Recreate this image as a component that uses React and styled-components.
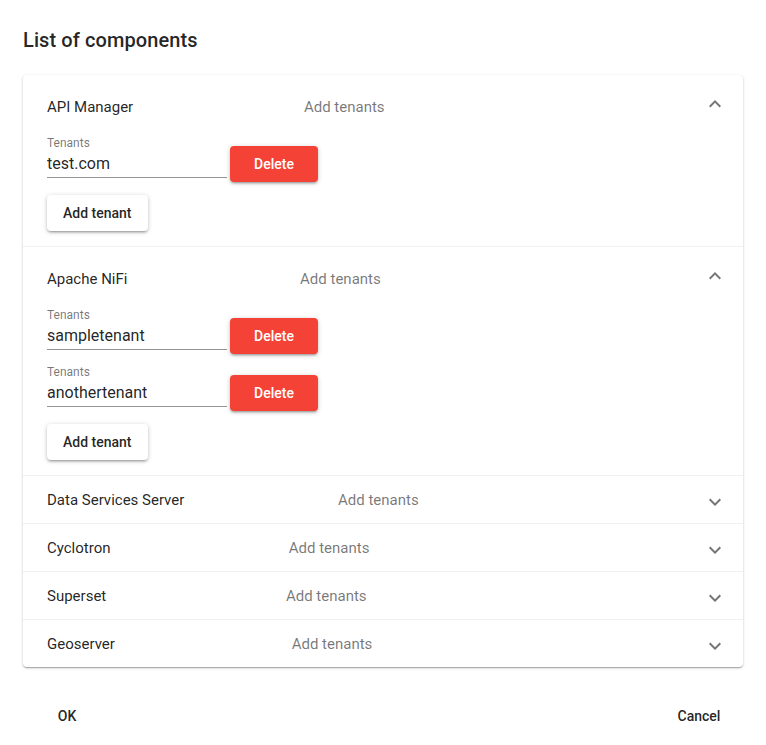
import React, { useState } from "react";
import styled, { createGlobalStyle, css } from "styled-components";

const GlobalStyle = createGlobalStyle`
  body {
    margin: 0;
    background: #fff;
    font-family: Roboto, "Liberation Sans", Arial, sans-serif;
    color: rgba(0, 0, 0, 0.87);
  }
  * {
    box-sizing: border-box;
  }
`;

const Dialog = styled.div`
  width: 766px;
  min-height: 745px;
  display: flex;
  flex-direction: column;
`;

const Title = styled.h2`
  margin: 0;
  padding: 24px 23px 19px;
  font-size: 20px;
  font-weight: 500;
  line-height: 32px;
  letter-spacing: 0.1px;
`;

const Content = styled.div`
  padding: 0 23px;
`;

const PanelList = styled.div`
  background: #fff;
  border-radius: 4px;
  box-shadow: 0px 1px 3px 0px rgba(0, 0, 0, 0.2),
    0px 1px 1px 0px rgba(0, 0, 0, 0.14), 0px 2px 1px -1px rgba(0, 0, 0, 0.12);
`;

const Panel = styled.section`
  & + & {
    border-top: 1px solid #f0f0f0;
  }
`;

const Summary = styled.div`
  position: relative;
  display: flex;
  align-items: center;
  height: ${(props) => (props.expanded ? "61px" : "47px")};
  padding: ${(props) => (props.expanded ? "3px 17px 0 24px" : "0 17px 0 24px")};
  cursor: pointer;
`;

const Heading = styled.span`
  flex: 1 1 auto;
  font-size: 15px;
  line-height: 22px;
`;

const Secondary = styled.span`
  flex: 2 1 auto;
  font-size: 15px;
  line-height: 22px;
  color: rgba(0, 0, 0, 0.54);
`;

const ExpandIcon = styled.svg`
  position: absolute;
  right: 16px;
  top: ${(props) => (props.expanded ? "17px" : "14px")};
  width: 24px;
  height: 24px;
  fill: rgba(0, 0, 0, 0.54);
  ${(props) =>
    props.expanded &&
    css`
      transform: rotate(180deg);
    `}
`;

const Details = styled.div`
  display: flex;
  flex-direction: column;
  align-items: flex-start;
  gap: 11px;
  padding: 0 24px 15px;
`;

const TenantRow = styled.div`
  display: flex;
  align-items: flex-start;
`;

const Field = styled.label`
  display: flex;
  flex-direction: column;
  width: 180px;
`;

const FieldLabel = styled.span`
  font-size: 12px;
  line-height: 14px;
  color: rgba(0, 0, 0, 0.54);
`;

const FieldInput = styled.input`
  box-sizing: content-box;
  width: 100%;
  height: 19px;
  margin: 0;
  padding: 4px 0;
  border: none;
  border-bottom: 1px solid rgba(0, 0, 0, 0.42);
  outline: none;
  background: transparent;
  font-family: inherit;
  font-size: 16px;
  line-height: 19px;
  color: rgba(0, 0, 0, 0.87);
`;

const Button = styled.button`
  min-width: 88px;
  height: 36px;
  padding: 0 16px;
  border: none;
  border-radius: 4px;
  font-family: inherit;
  font-size: 14px;
  font-weight: 500;
  line-height: 36px;
  cursor: pointer;
  background: transparent;
  color: rgba(0, 0, 0, 0.87);
`;

const RaisedButton = styled(Button)`
  background: ${(props) => (props.danger ? "#f44336" : "#fff")};
  color: ${(props) => (props.danger ? "#fff" : "rgba(0, 0, 0, 0.87)")};
  box-shadow: 0px 1px 5px 0px rgba(0, 0, 0, 0.2),
    0px 2px 2px 0px rgba(0, 0, 0, 0.14), 0px 3px 1px -2px rgba(0, 0, 0, 0.12);
`;

const DeleteButton = styled(RaisedButton)`
  margin: 10px 0 0 3px;
`;

const AddButton = styled(RaisedButton)`
  margin-top: 2px;
`;

const Actions = styled.div`
  display: flex;
  justify-content: space-between;
  padding: 31px 23px 0;
`;

const initialComponents = [
  { name: "API Manager", expanded: true, tenants: ["test.com"] },
  { name: "Apache NiFi", expanded: true, tenants: ["sampletenant", "anothertenant"] },
  { name: "Data Services Server", expanded: false, tenants: [] },
  { name: "Cyclotron", expanded: false, tenants: [] },
  { name: "Superset", expanded: false, tenants: [] },
  { name: "Geoserver", expanded: false, tenants: [] },
];

export default function App() {
  const [components, setComponents] = useState(initialComponents);

  const toggle = (index) => {
    setComponents((list) =>
      list.map((c, i) => (i === index ? { ...c, expanded: !c.expanded } : c))
    );
  };

  return (
    <>
      <GlobalStyle />
      <Dialog>
        <Title>List of components</Title>
        <Content>
          <PanelList>
            {components.map((component, index) => (
              <Panel key={component.name}>
                <Summary expanded={component.expanded} onClick={() => toggle(index)}>
                  <Heading>{component.name}</Heading>
                  <Secondary>Add tenants</Secondary>
                  <ExpandIcon expanded={component.expanded} viewBox="0 0 24 24">
                    <path d="M16.59 8.59L12 13.17 7.41 8.59 6 10l6 6 6-6z" />
                  </ExpandIcon>
                </Summary>
                {component.expanded && (
                  <Details>
                    {component.tenants.map((tenant, i) => (
                      <TenantRow key={i}>
                        <Field>
                          <FieldLabel>Tenants</FieldLabel>
                          <FieldInput defaultValue={tenant} />
                        </Field>
                        <DeleteButton danger>Delete</DeleteButton>
                      </TenantRow>
                    ))}
                    <AddButton>Add tenant</AddButton>
                  </Details>
                )}
              </Panel>
            ))}
          </PanelList>
        </Content>
        <Actions>
          <Button>OK</Button>
          <Button>Cancel</Button>
        </Actions>
      </Dialog>
    </>
  );
}
